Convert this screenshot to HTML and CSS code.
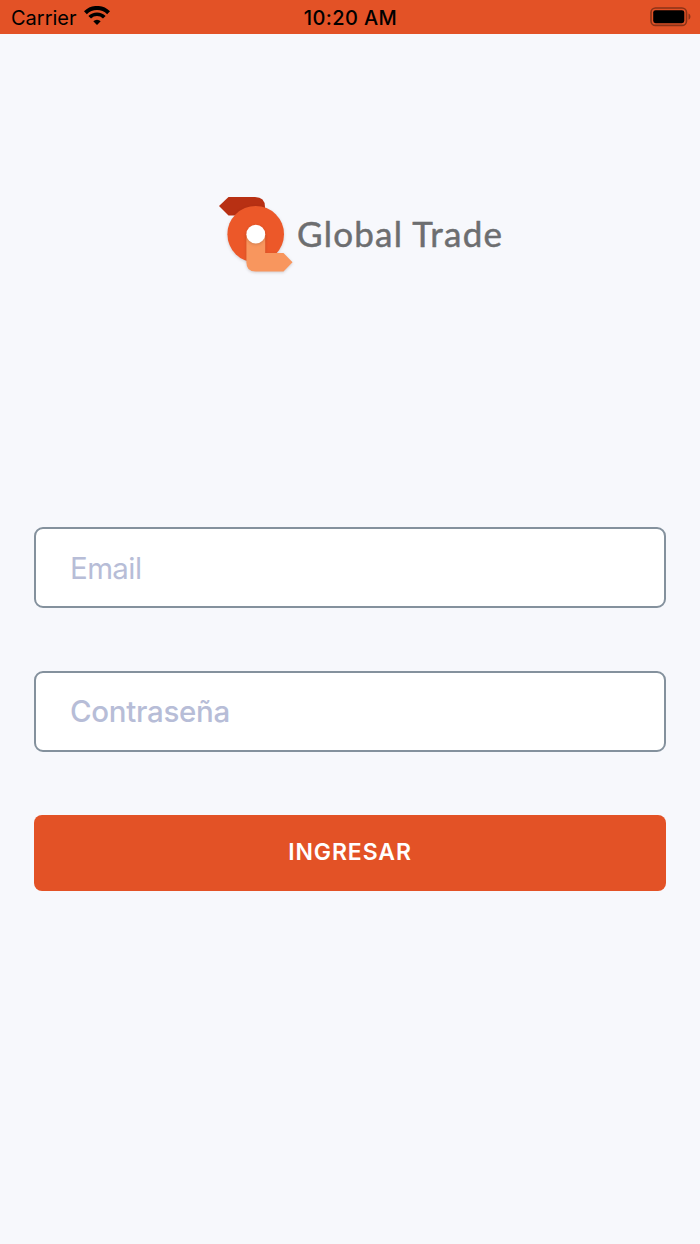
FILE: index.html
```html
<!DOCTYPE html>
<html lang="es">
<head>
<meta charset="utf-8">
<title>Global Trade</title>
<link rel="stylesheet" href="styles.css">
</head>
<body>
<div class="screen">
  <header class="status">
    <div class="status-left">
      <span class="carrier">Carrier</span>
      <svg class="wifi" width="26" height="19" viewBox="0 0 26 19" fill="none" stroke="#000">
        <path d="M1.4 6.7a16.6 16.6 0 0 1 23.2 0" stroke-width="4.1"/>
        <path d="M5.7 11.3a10.3 10.3 0 0 1 14.6 0" stroke-width="3.7"/>
        <path d="M13 19l-3.7-3.7a5.2 5.2 0 0 1 7.4 0z" fill="#000" stroke="none"/>
      </svg>
    </div>
    <span class="time">10:20 AM</span>
    <div class="status-right">
      <svg class="battery" width="42" height="20" viewBox="0 0 42 20">
        <rect x="1" y="1" width="35.5" height="17.4" rx="4.5" fill="none" stroke="#8b3318" stroke-width="1.6"/>
        <rect x="3.2" y="3.2" width="31.1" height="13" rx="2.4" fill="#000"/>
        <path d="M38.5 6.6c2.6 1.3 2.6 5 0 6.2z" fill="#8b3318"/>
      </svg>
    </div>
  </header>
  <main class="login">
    <div class="brand">
      <svg class="logo" width="82" height="86" viewBox="0 0 82 86">
        <path d="M4 15L13.5 6H40Q50 6 50 16V24.5H13.5Z" fill="#b83013"/>
        <circle class="shade" cx="40.7" cy="43.2" r="28.3" fill="#ec5829"/>
        <path class="shade" d="M31.4 43H50.2V62H68.5L77.5 71.2L68.5 80.5H40.5Q31.4 80.5 31.4 71.5Z" fill="#f8965e"/>
        <circle class="shade" cx="40.8" cy="43.2" r="9.4" fill="#fff"/>
      </svg>
      <svg class="wordmark" width="210" height="46" viewBox="0 0 210 46">
        <text x="0" y="38" textLength="205">Global Trade</text>
      </svg>
    </div>
    <form class="form">
      <input class="field email" type="email" placeholder="Email">
      <input class="field password" type="password" placeholder="Contraseña">
      <button class="submit" type="button">INGRESAR</button>
    </form>
  </main>
</div>
</body>
</html>
```

FILE: styles.css
```css
* { box-sizing: border-box; }
body {
  margin: 0;
  background: #f7f8fc;
  font-family: Inter, "Liberation Sans", sans-serif;
}
.screen {
  width: 700px;
  height: 1244px;
  overflow: hidden;
}
.status {
  display: grid;
  grid-template-columns: 1fr auto 1fr;
  align-items: center;
  height: 34px;
  padding: 0 8px 0 11px;
  background: #e35226;
  color: #000;
  font-size: 20px;
  line-height: 32px;
}
.status-left {
  display: flex;
  align-items: center;
  gap: 7px;
}
.wifi { margin-bottom: 3px; }
.carrier { padding-top: 2px; }
.time { padding: 2px 2px 0 0; font-weight: 500; letter-spacing: 0.4px; }
.status-right { display: flex; justify-content: flex-end; padding-bottom: 1px; }
.battery, .wifi, .logo, .wordmark { display: block; }
.brand {
  display: flex;
  height: 86px;
  margin: 157px 0 0 215px;
}
.shade { filter: drop-shadow(0 1px 1.5px rgba(60, 30, 20, 0.2)); }
.wordmark { margin-top: 18px; }
.wordmark text {
  font-family: Lato, "Noto Sans", sans-serif;
  font-size: 35px;
  fill: #6d6e70;
  stroke: #6d6e70;
  stroke-width: 0.5px;
  stroke-linejoin: round;
}
.form {
  display: flex;
  flex-direction: column;
  padding: 250px 34px 0;
}
.field {
  width: 100%;
  height: 81px;
  margin: 0 0 63px;
  padding: 0 34px;
  border: 2px solid #84919d;
  border-radius: 9px;
  background: #fff;
  font-family: inherit;
  font-size: 29.5px;
}
.field::placeholder { color: #b7bdd7; opacity: 1; }
.email { letter-spacing: -0.6px; }
.password {
  margin-bottom: 62.5px;
  padding-bottom: 2px;
  font-weight: 500;
  letter-spacing: -0.3px;
}
.submit {
  height: 76px;
  padding: 0 0 2px;
  border: 0;
  border-radius: 8px;
  background: #e35226;
  color: #fff;
  font-family: inherit;
  font-size: 23px;
  font-weight: 600;
  letter-spacing: 0.9px;
}
```
